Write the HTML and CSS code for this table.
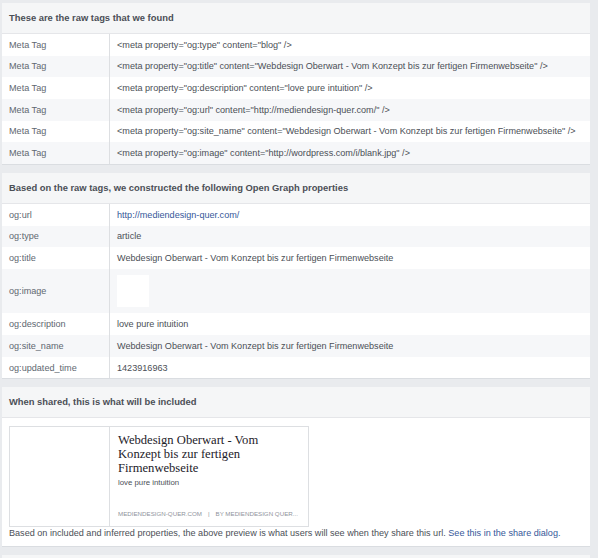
FILE: index.html
```html
<!DOCTYPE html>
<html>
<head>
<meta charset="utf-8">
<link rel="stylesheet" href="styles.css">
</head>
<body>
<div class="page">
  <section class="panel">
    <div class="panel-head">These are the raw tags that we found</div>
    <div class="kv">
      <div class="row"><div class="key">Meta Tag</div><div class="val">&lt;meta property="og:type" content="blog" /&gt;</div></div>
      <div class="row"><div class="key">Meta Tag</div><div class="val">&lt;meta property="og:title" content="Webdesign Oberwart - Vom Konzept bis zur fertigen Firmenwebseite" /&gt;</div></div>
      <div class="row"><div class="key">Meta Tag</div><div class="val">&lt;meta property="og:description" content="love pure intuition" /&gt;</div></div>
      <div class="row"><div class="key">Meta Tag</div><div class="val">&lt;meta property="og:url" content="http://mediendesign-quer.com/" /&gt;</div></div>
      <div class="row"><div class="key">Meta Tag</div><div class="val">&lt;meta property="og:site_name" content="Webdesign Oberwart - Vom Konzept bis zur fertigen Firmenwebseite" /&gt;</div></div>
      <div class="row"><div class="key">Meta Tag</div><div class="val">&lt;meta property="og:image" content="http://wordpress.com/i/blank.jpg" /&gt;</div></div>
    </div>
  </section>

  <section class="panel">
    <div class="panel-head">Based on the raw tags, we constructed the following Open Graph properties</div>
    <div class="kv">
      <div class="row"><div class="key">og:url</div><div class="val"><a class="link" href="#">http://mediendesign-quer.com/</a></div></div>
      <div class="row"><div class="key">og:type</div><div class="val">article</div></div>
      <div class="row"><div class="key">og:title</div><div class="val">Webdesign Oberwart - Vom Konzept bis zur fertigen Firmenwebseite</div></div>
      <div class="row row-img"><div class="key">og:image</div><div class="val"><div class="thumb"></div></div></div>
      <div class="row"><div class="key">og:description</div><div class="val">love pure intuition</div></div>
      <div class="row"><div class="key">og:site_name</div><div class="val">Webdesign Oberwart - Vom Konzept bis zur fertigen Firmenwebseite</div></div>
      <div class="row"><div class="key">og:updated_time</div><div class="val">1423916963</div></div>
    </div>
  </section>

  <section class="panel">
    <div class="panel-head">When shared, this is what will be included</div>
    <div class="share-body">
      <div class="card">
        <div class="card-img"></div>
        <div class="card-text">
          <div class="card-title">Webdesign Oberwart - Vom Konzept bis zur fertigen Firmenwebseite</div>
          <div class="card-desc">love pure intuition</div>
          <div class="card-foot">MEDIENDESIGN-QUER.COM<span class="sep">|</span>BY MEDIENDESIGN QUER...</div>
        </div>
      </div>
      <p class="note">Based on included and inferred properties, the above preview is what users will see when they share this url. <a class="link" href="#">See this in the share dialog.</a></p>
    </div>
  </section>

  <section class="panel panel-last">
    <div class="panel-head">&nbsp;</div>
  </section>
</div>
</body>
</html>
```

FILE: styles.css
```css
html, body {
  margin: 0;
  padding: 0;
  background: #e9ebee;
  overflow: hidden;
}
body {
  font-family: "Liberation Sans", Arial, sans-serif;
  font-size: 9.1px;
  color: #4b4f56;
}
.page {
  width: 588px;
  padding: 3px 0 0 2px;
}
.panel {
  background: #fff;
  border-bottom: 1px solid #dadde1;
  margin-bottom: 8px;
}
.panel-head {
  height: 30px;
  line-height: 30px;
  padding-left: 7px;
  background: #f5f6f7;
  border-bottom: 1px solid #e5e6e9;
  font-weight: bold;
  font-size: 9.4px;
  color: #4b4f56;
}
.row {
  display: grid;
  grid-template-columns: 108px 1fr;
  height: 21.67px;
}
.row:nth-child(even) {
  background: #f6f7f9;
}
.row-img {
  height: 44.5px;
}
.key {
  display: flex;
  align-items: center;
  padding-left: 7px;
  border-right: 1px solid #dddfe2;
  color: #606770;
}
.val {
  display: flex;
  align-items: center;
  padding-left: 7px;
  color: #4b4f56;
  white-space: nowrap;
}
.thumb {
  width: 32px;
  height: 32px;
  background: #fff;
}
.link {
  color: #365899;
  text-decoration: none;
}
.share-body {
  padding: 8px 7px 7px;
}
.card {
  display: flex;
  width: 298px;
  height: 99px;
  border: 1px solid #dddfe2;
}
.card-img {
  width: 99px;
  border-right: 1px solid #dddfe2;
  flex: none;
}
.card-text {
  display: flex;
  flex-direction: column;
  padding: 6px 8px 8px 8px;
  min-width: 0;
  flex: 1;
}
.card-title {
  font-family: "Liberation Serif", Georgia, serif;
  font-size: 12.6px;
  line-height: 14px;
  color: #1d2129;
  width: 170px;
}
.card-desc {
  margin-top: 3px;
  font-size: 7.8px;
  line-height: 10px;
  color: #4b4f56;
}
.card-foot {
  margin-top: auto;
  font-size: 6.2px;
  line-height: 9px;
  color: #90949c;
  white-space: nowrap;
}
.sep {
  padding: 0 6px;
}
.note {
  margin: 0;
  line-height: 12px;
  color: #4b4f56;
}
```
